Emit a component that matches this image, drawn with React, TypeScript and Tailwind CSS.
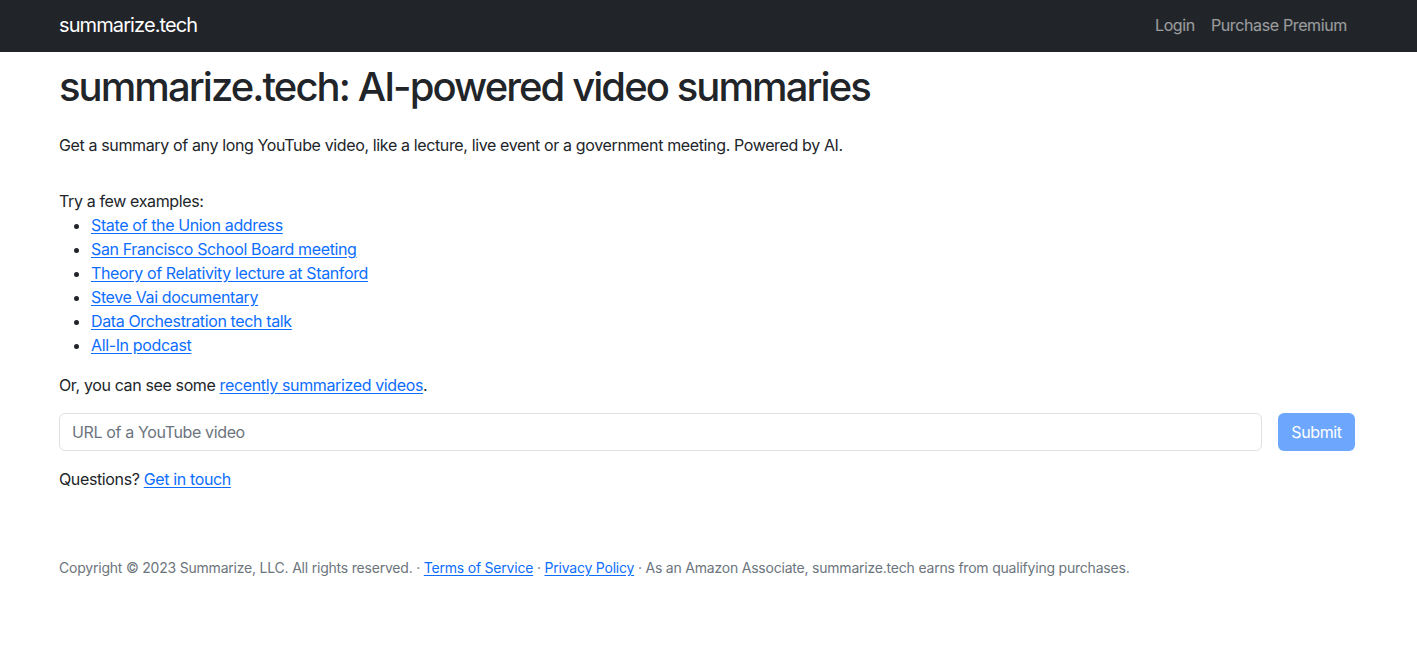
const examples = [
  "State of the Union address",
  "San Francisco School Board meeting",
  "Theory of Relativity lecture at Stanford",
  "Steve Vai documentary",
  "Data Orchestration tech talk",
  "All-In podcast",
];

const linkClass = "text-[#0d6efd] underline underline-offset-2";

const App = () => {
  return (
    <div className="min-h-screen bg-white text-[16px] leading-6 tracking-[-0.023em] text-[#212529] font-['Inter','Liberation_Sans',Arial,sans-serif]">
      <nav className="h-[52px] bg-[#212529]">
        <div className="flex h-full items-center justify-between pb-[2px] pl-[59px] pr-[62px]">
          <a href="#" className="text-[20px] tracking-[-0.045em] text-white">
            summarize.tech
          </a>
          <div className="flex items-center">
            <a href="#" className="px-2 text-white/55">
              Login
            </a>
            <a href="#" className="px-2 text-white/55">
              Purchase Premium
            </a>
          </div>
        </div>
      </nav>

      <main className="pl-[59px] pr-[62px]">
        <h1 className="mt-[11px] text-[40px] font-medium leading-[48px] tracking-[-0.048em]">
          summarize.tech: AI-powered video summaries
        </h1>
        <p className="mt-[22px]">
          Get a summary of any long YouTube video, like a lecture, live event or a government meeting. Powered by AI.
        </p>

        <p className="mt-8">Try a few examples:</p>
        <ul className="list-disc pl-8">
          {examples.map((title) => (
            <li key={title}>
              <a href="#" className={linkClass}>
                {title}
              </a>
            </li>
          ))}
        </ul>

        <p className="mt-4">
          Or, you can see some{" "}
          <a href="#" className={linkClass}>
            recently summarized videos
          </a>
          .
        </p>

        <form className="mt-4 flex gap-4">
          <input
            type="text"
            placeholder="URL of a YouTube video"
            className="h-[38px] flex-1 rounded-md border border-[#dee2e6] px-3 text-[16px] tracking-[-0.023em] text-[#212529] placeholder:text-[#6c757d] outline-none"
          />
          <button
            type="submit"
            disabled
            className="h-[38px] w-[77px] rounded-md bg-[#0d6efd] text-white opacity-60"
          >
            Submit
          </button>
        </form>

        <p className="mt-4">
          Questions?{" "}
          <a href="#" className={linkClass}>
            Get in touch
          </a>
        </p>

        <footer className="mt-[66px] text-[14px] leading-[21px] tracking-[-0.015em] text-[#6c757d]">
          Copyright © 2023 Summarize, LLC. All rights reserved. ·{" "}
          <a href="#" className={linkClass}>
            Terms of Service
          </a>{" "}
          ·{" "}
          <a href="#" className={linkClass}>
            Privacy Policy
          </a>{" "}
          · As an Amazon Associate, summarize.tech earns from qualifying purchases.
        </footer>
      </main>
    </div>
  );
};

export default App;
